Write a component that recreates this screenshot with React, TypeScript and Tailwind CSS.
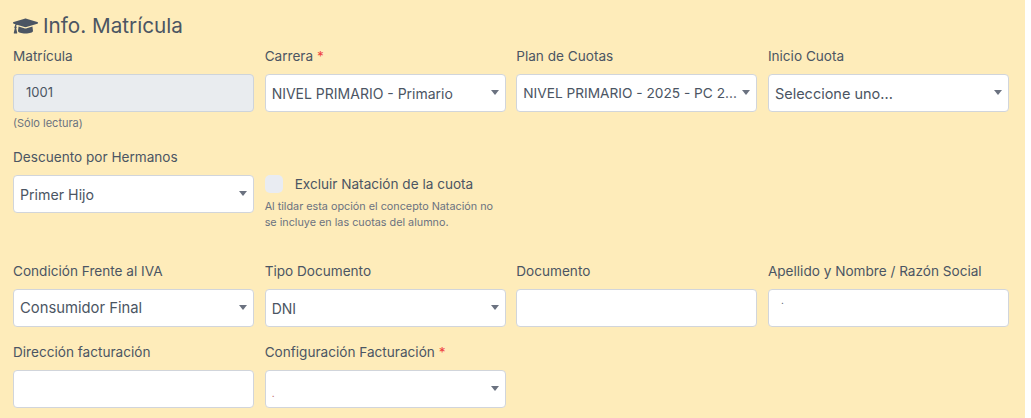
import React from "react";
import { FaGraduationCap } from "react-icons/fa";

const font = "font-['Inter','Liberation_Sans',sans-serif]";

const Label = ({ text, required }: { text: string; required?: boolean }) => (
  <label className="block h-[19px] mb-[8px] text-[13.6px] leading-[19px] text-[#4b5563] whitespace-nowrap">
    {text}
    {required && <span className="text-[#ef4444]"> *</span>}
  </label>
);

const Select = ({ value, size = "text-[14px] pt-[1px]" }: { value?: string; size?: string }) => (
  <div className="flex items-center h-[38px] bg-white border border-[#d1d5db] rounded-[4px] pl-[6px] pr-[6px]">
    <span className={`flex-1 min-w-0 whitespace-nowrap text-[#4b5563] ${size}`}>{value}</span>
    <span className="mb-[2px] w-0 h-0 border-l-[4px] border-r-[4px] border-t-[5px] border-l-transparent border-r-transparent border-t-[#6b7280]" />
  </div>
);

const Input = ({ value }: { value?: string }) => (
  <div className="h-[38px] bg-white border border-[#d1d5db] rounded-[4px] px-3 text-[10px] leading-[20px] text-[#4b5563]">
    {value}
  </div>
);

const App = () => {
  return (
    <div className={`${font} w-[1031px] h-[418px] bg-white overflow-hidden`}>
      <div className="w-[1025px] h-[418px] bg-[#feecba] pl-[13px] pr-[16px]">
        <h2 className="flex items-center h-[47px] pt-[4px] text-[20.7px] text-[#4b5563]">
          <FaGraduationCap className="w-[25px] h-[22px] mr-[5px]" />
          Info. Matrícula
        </h2>

        <div className="grid grid-cols-4 gap-x-[10.5px]">
          <div>
            <Label text="Matrícula" />
            <div className="flex items-center h-[38px] bg-[#e9ecef] border border-[#ced4da] rounded-[4px] pl-3 text-[13px] text-[#4b5563]">
              1001
            </div>
            <p className="mt-[4px] text-[11px] leading-[14px] text-[#6b7280]">(Sólo lectura)</p>
          </div>
          <div>
            <Label text="Carrera" required />
            <Select value="NIVEL PRIMARIO - Primario" />
          </div>
          <div>
            <Label text="Plan de Cuotas" />
            <Select value="NIVEL PRIMARIO - 2025 - PC 2..." size="text-[13.7px] pt-[1px]" />
          </div>
          <div>
            <Label text="Inicio Cuota" />
            <Select value="Seleccione uno..." size="text-[14.5px] pt-[1px]" />
          </div>
        </div>

        <div className="grid grid-cols-4 gap-x-[10.5px] mt-[18px]">
          <div>
            <Label text="Descuento por Hermanos" />
            <Select value="Primer Hijo" size="text-[14.2px] pt-[1px]" />
          </div>
          <div className="pt-[26px]">
            <div className="flex items-center h-[19px]">
              <span className="w-[18px] h-[18px] rounded-[5px] bg-[#e9ecf2]" />
              <span className="ml-[12px] pt-[1px] text-[13.6px] text-[#4b5563] whitespace-nowrap">
                Excluir Natación de la cuota
              </span>
            </div>
            <p className="mt-[6px] text-[10.8px] leading-[16px] text-[#6b7280]">
              Al tildar esta opción el concepto Natación no se incluye en las cuotas del alumno.
            </p>
          </div>
        </div>

        <div className="grid grid-cols-4 gap-x-[10.5px] mt-[31px]">
          <div>
            <Label text="Condición Frente al IVA" />
            <Select value="Consumidor Final" size="text-[14.8px] pt-[1px]" />
          </div>
          <div>
            <Label text="Tipo Documento" />
            <Select value="DNI" />
          </div>
          <div>
            <Label text="Documento" />
            <Input />
          </div>
          <div>
            <Label text="Apellido y Nombre / Razón Social" />
            <Input value="." />
          </div>
        </div>

        <div className="grid grid-cols-4 gap-x-[10.5px] mt-[16px]">
          <div>
            <Label text="Dirección facturación" />
            <Input />
          </div>
          <div>
            <Label text="Configuración Facturación" required />
            <Select value="." size="text-[10px] pt-2 text-[#b45a5a]" />
          </div>
        </div>
      </div>
    </div>
  );
};

export default App;
